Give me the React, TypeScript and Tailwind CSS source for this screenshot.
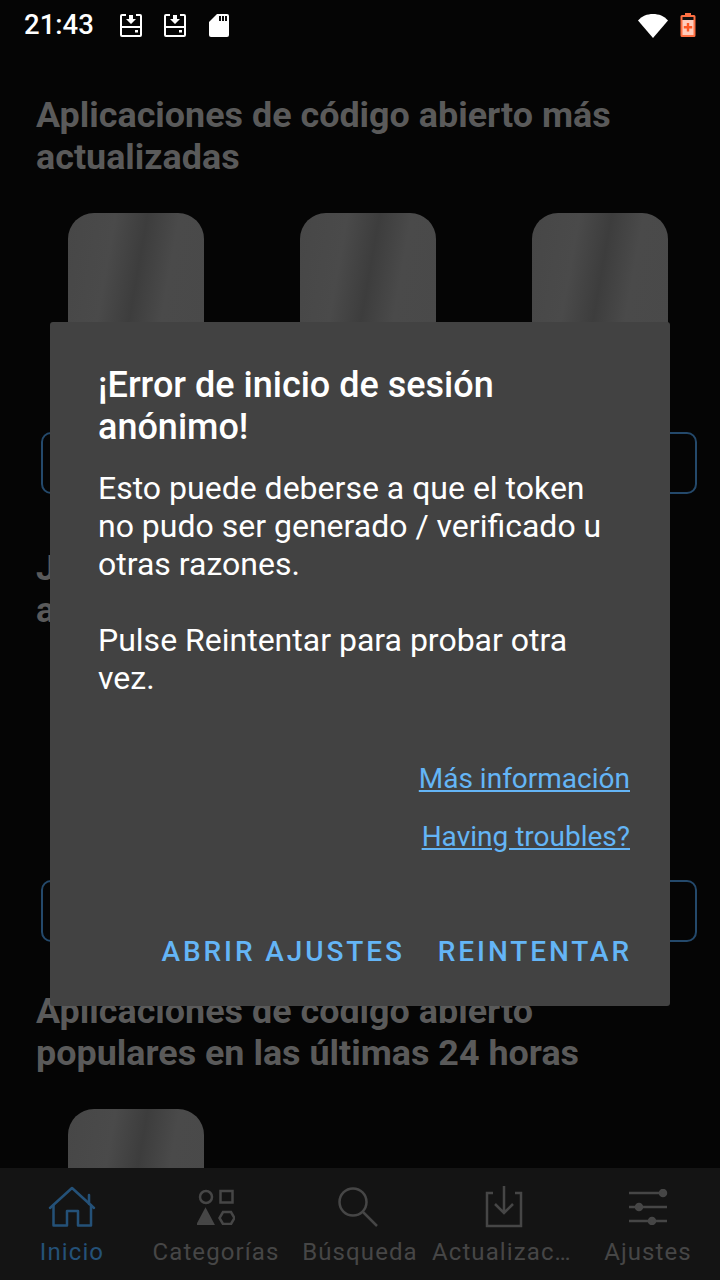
import React from 'react';

const font = { fontFamily: 'Roboto, sans-serif' };

const Tile = () => (
  <div className="h-[136px] w-[136px] rounded-t-[26px] bg-[linear-gradient(100deg,#474747_0%,#4a4a4a_30%,#3d3d3d_50%,#4a4a4a_70%,#494949_100%)]" />
);

const DiskIcon = () => (
  <svg width="22" height="23" viewBox="0 0 22 23" fill="none" stroke="#fff" strokeWidth="2">
    <path d="M6 1H2a1 1 0 0 0-1 1v19a1 1 0 0 0 1 1h18a1 1 0 0 0 1-1V2a1 1 0 0 0-1-1h-4" />
    <path d="M1 13h20" />
    <path d="M9 1h4v4h3l-5 5-5-5h3z" fill="#fff" stroke="none" />
    <rect x="15" y="16" width="3" height="2.500" fill="#fff" stroke="none" />
  </svg>
);

const StatusBar = () => (
  <div className="flex h-[50px] items-center justify-between pl-6 pr-[24px]">
    <div className="flex items-center">
      <span className="w-[70px] text-[27.500px] font-medium leading-none text-white">21:43</span>
      <div className="ml-[26px] flex items-center gap-[22px]">
        <DiskIcon />
        <DiskIcon />
        <svg width="22" height="24" viewBox="0 0 22 24" fill="#fff">
          <path d="M9 1h10a2 2 0 0 1 2 2v19a2 2 0 0 1-2 2H3a2 2 0 0 1-2-2V9z" />
          <path d="M11 3h2v5h-2zM14 3h2v5h-2zM17 3h2v5h-2z" fill="#0a0a0a" />
        </svg>
      </div>
    </div>
    <div className="flex items-center gap-[12px]">
      <svg width="30" height="25" viewBox="0 0 30 25" fill="#fff">
        <path d="M0 7.500C4 3 9 1 15 1s11 2 15 6.500L15 25z" />
      </svg>
      <svg width="16" height="26" viewBox="0 0 16 26">
        <path d="M5 1h6v2h3a1.500 1.500 0 0 1 1.500 1.500v19A1.500 1.500 0 0 1 14 25H2a1.500 1.500 0 0 1-1.500-1.500v-19A1.500 1.500 0 0 1 2 3h3z" fill="#ff7043" />
        <rect x="2.500" y="5" width="11" height="3" fill="#111" />
        <rect x="2.500" y="8" width="11" height="15" fill="#ffccbc" />
        <path d="M6.800 11h2.400v3h3v2.400h-3v3H6.800v-3h-3V14h3z" fill="#ff5722" />
      </svg>
    </div>
  </div>
);

const OutlineBox = () => <div className="ml-[41px] h-[62px] w-[656px] rounded-[10px] border-2 border-[#24496b]" />;

const Heading = ({ children }: { children: React.ReactNode }) => (
  <h2 className="pl-9 pr-[90px] text-[35.900px] font-bold leading-[42px] text-[#5a5a5a]">{children}</h2>
);

const TileRow = () => (
  <div className="flex gap-[96px] pl-[68px]">
    <Tile />
    <Tile />
    <Tile />
  </div>
);

const navItems = [
  {
    label: 'Inicio',
    active: true,
    icon: (
      <svg width="48" height="42" viewBox="0 0 48 42" fill="none" stroke="currentColor" strokeWidth="2.500" strokeLinejoin="round" strokeLinecap="round">
        <path d="M2 22 24 2l22 20" />
        <path d="M41 9v9" />
        <path d="M5.500 19v20.500H19V25h11v14.500h13V19" />
      </svg>
    ),
  },
  {
    label: 'Categorías',
    icon: (
      <svg width="38" height="36" viewBox="0 0 38 36" fill="none" stroke="currentColor" strokeWidth="2.500">
        <circle cx="9" cy="8" r="6" />
        <rect x="23.500" y="2" width="12" height="11.500" />
        <path d="M1 35 8.500 21 16 35z" fill="currentColor" />
        <path d="M26 23h8l3.500 6-3.500 6h-8l-3.500-6z" />
      </svg>
    ),
  },
  {
    label: 'Búsqueda',
    icon: (
      <svg className="mr-[4px]" width="40" height="40" viewBox="0 0 40 40" fill="none" stroke="currentColor" strokeWidth="2.500">
        <circle cx="15" cy="15" r="13.500" />
        <path d="m25 25 14 14" />
      </svg>
    ),
  },
  {
    label: 'Actualizaciones',
    icon: (
      <svg width="38" height="42" viewBox="0 0 38 42" fill="none" stroke="currentColor" strokeWidth="2.500">
        <path d="M8 7H2v33h34V7h-6" />
        <path d="M19 0v27M10 18l9 9 9-9" />
      </svg>
    ),
  },
  {
    label: 'Ajustes',
    icon: (
      <svg width="40" height="36" viewBox="0 0 40 36" fill="none" stroke="currentColor" strokeWidth="2.500">
        <path d="M1 4h38M1 18h38M1 32h38" />
        <circle cx="35" cy="4" r="3" fill="currentColor" />
        <circle cx="11" cy="18" r="3" fill="currentColor" />
        <circle cx="24" cy="32" r="3" fill="currentColor" />
      </svg>
    ),
  },
];

const BottomNav = () => (
  <nav className="mt-auto flex h-[112px] bg-[#141414]">
    {navItems.map((item) => (
      <div
        key={item.label}
        className={`flex w-[144px] flex-col items-center ${item.active ? 'text-[#245178]' : 'text-[#464646]'}`}
      >
        <div className="flex h-[66px] items-center pt-[12px]">{item.icon}</div>
        <span className="w-[144px] truncate text-center text-[24px] leading-[36px] tracking-[1.100px]">
          {item.label}
        </span>
      </div>
    ))}
  </nav>
);

const Dialog = () => (
  <div className="absolute left-[50px] top-[322px] flex h-[684px] w-[620px] flex-col rounded-[3px] bg-[#424242] pl-12 pr-10 pt-[42px] text-white">
    <h1 className="text-[36px] font-medium leading-[42px]">¡Error de inicio de sesión anónimo!</h1>
    <p className="mt-[21px] pr-2 text-[32px] leading-[38px]">
      Esto puede deberse a que el token no pudo ser generado / verificado u otras razones.
    </p>
    <p className="mt-[38px] pr-2 text-[32px] leading-[38px]">Pulse Reintentar para probar otra vez.</p>
    <div className="mt-[65px] flex flex-col items-end gap-[24px] text-[28px] leading-[34px] text-[#64b5f6]">
      <span className="underline">Más información</span>
      <span className="underline">Having troubles?</span>
    </div>
    <div className="-mr-[2px] mt-[80px] flex justify-end gap-[33px] text-[28px] font-medium leading-[36px] tracking-[2.900px] text-[#64b5f6]">
      <span>ABRIR AJUSTES</span>
      <span>REINTENTAR</span>
    </div>
  </div>
);

export default function App() {
  return (
    <div className="relative flex h-[1280px] w-[720px] flex-col overflow-hidden bg-[#050505]" style={font}>
      <StatusBar />
      <div className="flex h-[1118px] flex-col overflow-hidden pt-[44px]">
        <Heading>Aplicaciones de código abierto más actualizadas</Heading>
        <div className="mt-[35px]">
          <TileRow />
        </div>
        <div className="mt-[83px]">
          <OutlineBox />
        </div>
        <div className="mt-[53px]">
          <Heading>Juegos de código abierto más actualizados</Heading>
        </div>
        <div className="mt-[249px]">
          <OutlineBox />
        </div>
        <div className="mt-[48px]">
          <Heading>Aplicaciones de código abierto populares en las últimas 24 horas</Heading>
        </div>
        <div className="mt-[35px] pl-[68px]">
          <Tile />
        </div>
      </div>
      <BottomNav />
      <Dialog />
    </div>
  );
}
